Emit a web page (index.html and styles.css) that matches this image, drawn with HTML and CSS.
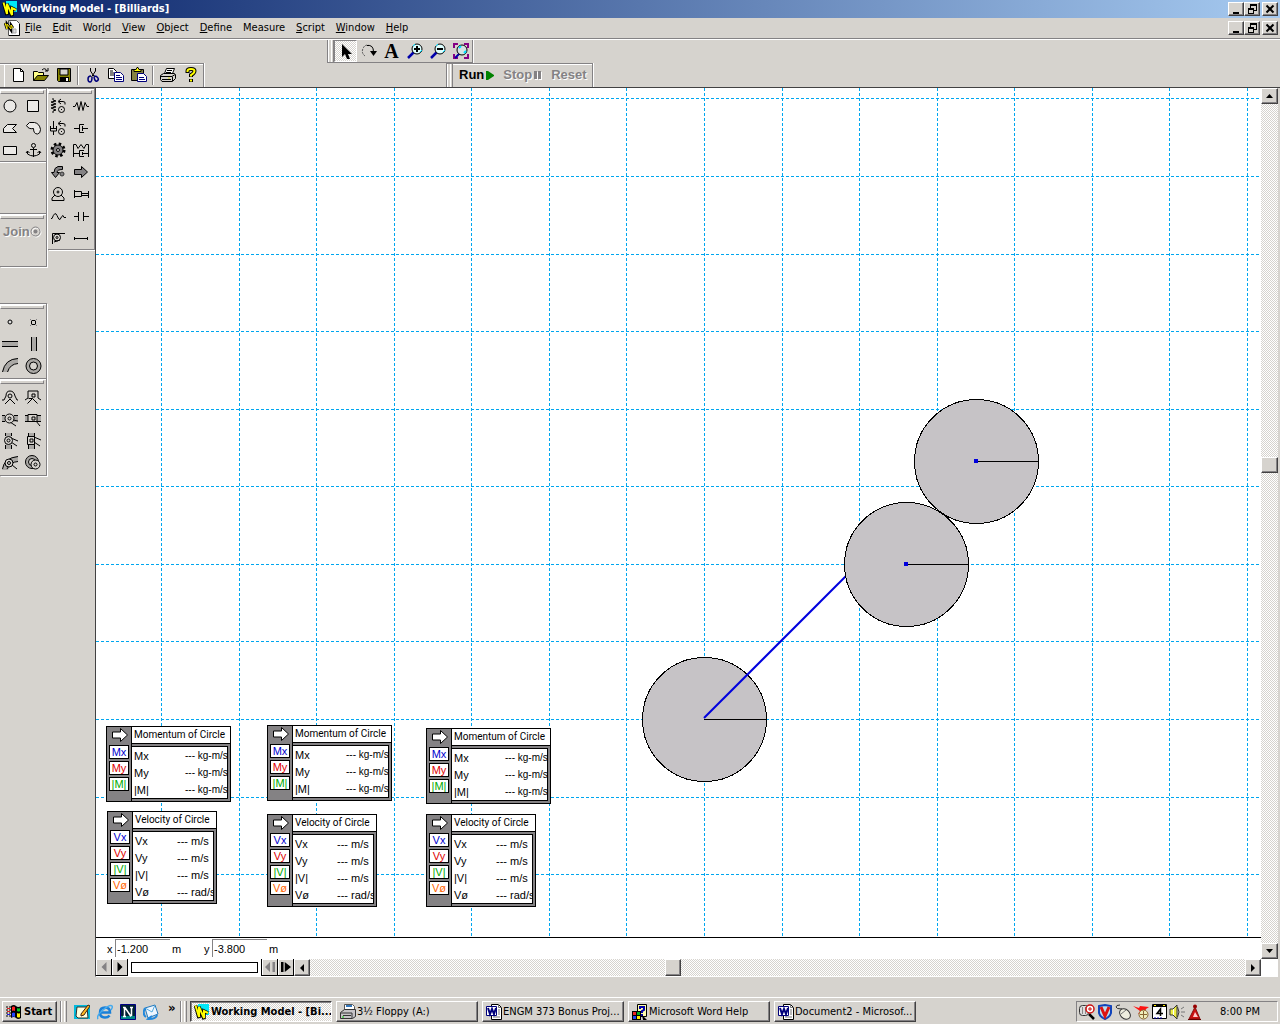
FILE: index.html
```html
<!DOCTYPE html>
<html lang="en">
<head>
<meta charset="utf-8">
<title>Working Model - [Billiards]</title>
<link rel="stylesheet" href="styles.css">
</head>
<body>
<svg class="defs" aria-hidden="true">
  <symbol id="logo" viewBox="0 0 16 16"><path d="M4 0H15V11H9L4 6z" fill="#00e8f8"/><path d="M1.500 1.500L5 14V3L10 15V7L14 9" fill="none" stroke="#000" stroke-width="3.500"/><path d="M1.500 1.500L5 13V3L10 14V7L14 9" fill="none" stroke="#ff0" stroke-width="2"/></symbol>
  <symbol id="min" viewBox="0 0 10 10"><path d="M2 8h6v2H2z"/></symbol>
  <symbol id="restore" viewBox="0 0 10 10"><path d="M3 0h7v7H7V6h2V2H4v2H3zM1 4h6v6H1zM2 6v3h4V6z" fill-rule="evenodd"/></symbol>
  <symbol id="close" viewBox="0 0 10 10"><path d="M1.500 1.500L8.500 8.500M8.500 1.500L1.500 8.500" stroke="#000" stroke-width="2"/></symbol>
  <symbol id="word" viewBox="0 0 16 16"><path d="M5.500.500h7l3 3v12h-10z" fill="#fff" stroke="#000"/><path d="M12.500.500v3h3M12 6h2M12 8h2M12 10h2M7 13h7" fill="none" stroke="#777"/><path d="M.500 2.500h10v9H.500z" fill="#fff" stroke="#00007b"/><path d="M2 4l2 6 2-5 2 5 2-6" fill="none" stroke="#00007b" stroke-width="2"/></symbol>
  <symbol id="left" viewBox="0 0 8 8"><path d="M6 0v8L2 4z"/></symbol>
  <symbol id="right" viewBox="0 0 8 8"><path d="M2 0v8l4-4z"/></symbol>
  <symbol id="arrow" viewBox="0 0 18 16"><path d="M1.500 5h8V1.500l7 6.500-7 6.500V11h-8z" fill="#fff" stroke="#000"/></symbol>
</svg>

<header class="titlebar">
  <svg class="i16"><use href="#logo"/></svg>
  <h1>Working Model - [Billiards]</h1>
  <div class="winbtns">
    <button aria-label="Minimize"><svg><use href="#min"/></svg></button><button aria-label="Restore"><svg><use href="#restore"/></svg></button><button class="x" aria-label="Close"><svg><use href="#close"/></svg></button>
  </div>
</header>

<nav class="menubar">
  <svg class="i16" viewBox="0 0 16 16"><path d="M4.500.500h8l3 3v12h-11z" fill="#fff" stroke="#555"/><path d="M15.500 4v11.500H5" fill="none" stroke="#000"/><path d="M9 9h3v4H9z" fill="#ddd" stroke="#aaa"/><path d="M1 3l2 6V4l4 6V5l2 3" fill="none" stroke="#000" stroke-width="2.500"/><path d="M1 3l2 6V4l4 5V5l2 3" fill="none" stroke="#fe0"/></svg>
  <div class="menus">
    <button><u>F</u>ile</button><button><u>E</u>dit</button><button>Wor<u>l</u>d</button><button><u>V</u>iew</button><button><u>O</u>bject</button><button><u>D</u>efine</button><button>Measure</button><button><u>S</u>cript</button><button><u>W</u>indow</button><button><u>H</u>elp</button>
  </div>
  <div class="winbtns">
    <button aria-label="Minimize document"><svg><use href="#min"/></svg></button><button aria-label="Restore document"><svg><use href="#restore"/></svg></button><button class="x" aria-label="Close document"><svg><use href="#close"/></svg></button>
  </div>
</nav>

<div class="bars">
  <div class="barrow tools">
    <div class="bar">
      <span class="grip"></span>
      <button class="on" aria-label="Select"><svg class="i16" viewBox="0 0 16 16"><path d="M4 1v13l3-3 2 5h3l-2-5h4z"/></svg></button>
      <button aria-label="Rotate"><svg class="i16" viewBox="0 0 16 16"><path d="M4 13Q0 10 2 5.500T8 2.500" fill="none" stroke="#555" stroke-dasharray="2 1"/><path d="M6 2.500Q12.500 1.500 12.500 9" fill="none" stroke="#000"/><path d="M9 8h7l-3.500 5z"/></svg></button>
      <button class="texttool" aria-label="Text tool">A</button>
      <button aria-label="Zoom in"><svg class="i16" viewBox="0 0 16 16"><path d="M1 15l6-6" stroke="#00a" stroke-width="2.500"/><circle cx="10" cy="6" r="5" fill="#dff" stroke="#000"/><path d="M6 3l2-2M13 9l2-2" stroke="#0df"/><path d="M7 6h6M10 3v6" stroke="#000" stroke-width="2"/></svg></button>
      <button aria-label="Zoom out"><svg class="i16" viewBox="0 0 16 16"><path d="M1 15l6-6" stroke="#00a" stroke-width="2.500"/><circle cx="10" cy="6" r="5" fill="#dff" stroke="#000"/><path d="M6 3l2-2M13 9l2-2" stroke="#0df"/><path d="M7 6h6" stroke="#000" stroke-width="2"/></svg></button>
      <button aria-label="Zoom to extent"><svg class="i16" viewBox="0 0 16 16"><path d="M1 5V1h4M11 1h4v4M15 11v4h-4M5 15H1v-4" fill="none" stroke="#840084" stroke-width="2"/><path d="M2 15l5-5" stroke="#00a" stroke-width="2"/><circle cx="9" cy="7" r="5" fill="#d6e4e4" stroke="#000"/><path d="M6 5l2-2M11 10l2-2" stroke="#0df" stroke-width="2"/></svg></button>
    </div>
  </div>
  <div class="barrow files">
    <div class="bar filebar">
      <span class="edge"></span>
      <button aria-label="New"><svg class="i16" viewBox="0 0 16 16"><path d="M3.500 1.500h7l3 3v10h-10z" fill="#fff" stroke="#000"/><path d="M10.500 1.500v3h3" fill="none" stroke="#000"/></svg></button>
      <button aria-label="Open"><svg class="i16" viewBox="0 0 16 16"><path d="M.500 13.500v-9h4l1 1h5v3" fill="#ff8" stroke="#000"/><path d="M.500 13.500l4-5h11l-4 5z" fill="#848200" stroke="#000"/><path d="M9 3q3-3 5 1M15 1v3h-3" fill="none" stroke="#000"/></svg></button>
      <button aria-label="Save"><svg class="i16" viewBox="0 0 16 16"><path d="M1.500 1.500h13v13h-12l-1-1z" fill="#848200" stroke="#000"/><path d="M4 2h8v6H4z" fill="#d6d3ce" stroke="#000"/><path d="M4 10h9v5H4z"/><path d="M10 11h2v3h-2z" fill="#fff"/></svg></button>
      <span class="sep"></span>
      <button aria-label="Cut"><svg class="i16" viewBox="0 0 16 16"><path d="M5.500 1v3l4 6M10.500 1v3l-4 6" fill="none" stroke="#000"/><path d="M6 9q-3 0-3 3t2 3 2-5M9 9q3 0 4 2t-1 3-3-4" fill="none" stroke="#00007b" stroke-width="1.500"/></svg></button>
      <button aria-label="Copy"><svg class="i16" viewBox="0 0 16 16"><path d="M.500 1.500h5l3 3v7h-8z" fill="#fff" stroke="#000"/><path d="M2 4h3M2 6h4M2 8h4" stroke="#000"/><path d="M6.500 5.500h6l3 3v6h-9z" fill="#fff" stroke="#00007b"/><path d="M8 8.500h4M8 10.500h6M8 12.500h6" stroke="#00007b"/></svg></button>
      <button aria-label="Paste"><svg class="i16" viewBox="0 0 16 16"><path d="M.500 2.500h12v11H.500z" fill="#848242" stroke="#000"/><path d="M3 4.500h7v-2H8l-1-2H6l-1 2H3z" fill="#ff0" stroke="#000"/><path d="M6.500 6.500h6l3 3v5h-9z" fill="#fff" stroke="#00007b"/><path d="M8 10.500h5M8 12.500h6" stroke="#00007b"/></svg></button>
      <span class="sep"></span>
      <button aria-label="Print"><svg class="i16" viewBox="0 0 16 16"><path d="M4.500 6.500l2-5h8l-2 5" fill="#fff" stroke="#000"/><path d="M7 3.500h5M6 5.500h5" stroke="#000"/><path d="M.500 8.500l3-2h11l1 1v4l-3 3H2l-1.500-2z" fill="#d6d3ce" stroke="#000"/><path d="M1 9.500h11l3-2M2 12.500h9M12.500 10v4" fill="none" stroke="#000"/><path d="M8 11h2" stroke="#dd0"/></svg></button>
      <button aria-label="Help"><svg class="i16" viewBox="0 0 16 16"><path d="M4.500 6V4q0-2 3.500-2t3.500 2T8 8v2M8 12v3" fill="none" stroke="#000" stroke-width="4"/><path d="M4.500 5V4q0-2 3.500-2t3.500 2T8 8v1.500M8 12.500v2" fill="none" stroke="#ff0" stroke-width="2"/></svg></button>
    </div>
    <div class="bar runbar">
      <span class="grip"></span>
      <button class="run">Run<svg width="8" height="9" viewBox="0 0 8 9"><path d="M0 0h2l6 4v1L2 9H0z" fill="#008200"/></svg></button>
      <button class="off" disabled>Stop<svg width="8" height="9" viewBox="0 0 8 9"><path d="M1 1h3v8H1zM5 1h3v8H5z" fill="#fff"/><path d="M0 0h3v8H0zM4 0h3v8H4z" fill="#848284"/></svg></button>
      <button class="off" disabled>Reset</button>
    </div>
  </div>
</div>

<main class="work">
  <aside class="palettes">
    <div class="pcol">
      <div class="pal bodies">
        <span class="hgrip"></span>
        <div class="pgrid">
          <button aria-label="Circle"><svg viewBox="0 0 18 18"><circle cx="9" cy="9" r="6" fill="#ebe9e6" stroke="#000"/></svg></button>
          <button aria-label="Square"><svg viewBox="0 0 18 18"><path d="M3.500 3.500h11v11h-11z" fill="#ebe9e6" stroke="#000"/></svg></button>
          <button aria-label="Polygon"><svg viewBox="0 0 18 18"><path d="M2.500 13.500v-4l4-4h9l-4 4 4 4z" fill="#ebe9e6" stroke="#000"/></svg></button>
          <button aria-label="Curved body"><svg viewBox="0 0 18 18"><path d="M2.500 6.500l3-3h5q5 1 6 7 0 4-3 4.500-4 0-4-5.500-5 1-7-3z" fill="#ebe9e6" stroke="#000"/></svg></button>
          <button aria-label="Rectangle"><svg viewBox="0 0 18 18"><path d="M2.500 5.500h13v8h-13z" fill="#ebe9e6" stroke="#000"/></svg></button>
          <button aria-label="Anchor"><svg viewBox="0 0 18 18"><g fill="none" stroke="#000"><circle cx="9.500" cy="4.500" r="2"/><path d="M9.500 7v9M6 8.500h7M3.500 10v3q6 4 12 0v-3M2 12l1.500-2 2 2M13.500 12l2-2 1.500 2"/></g></svg></button>
        </div>
      </div>
      <div class="pal joinpal">
        <span class="hgrip"></span>
        <button class="off join" disabled>Join<svg width="12" height="12" viewBox="0 0 12 12"><circle cx="6.500" cy="6.500" r="4.500" fill="none" stroke="#fff"/><circle cx="5.500" cy="5.500" r="4.500" fill="none" stroke="#848284"/><circle cx="5.500" cy="5.500" r="2" fill="#848284"/></svg></button>
      </div>
      <div class="pal points">
        <span class="hgrip"></span>
        <div class="pgrid">
          <button aria-label="Point element"><svg viewBox="0 0 18 18"><circle cx="9" cy="9" r="2" fill="#ddd" stroke="#000"/></svg></button>
          <button aria-label="Square point element"><svg viewBox="0 0 18 18"><path d="M7.500 7.500h4v4h-4z" fill="none" stroke="#000"/><path d="M6 6l2 2M13 6l-2 2M6 13l2-2M13 13l-2-2" stroke="#848284"/></svg></button>
          <button aria-label="Horizontal slot"><svg viewBox="0 0 18 18"><path d="M1 6h16v6H1z" fill="#aaa8a5"/><path d="M1 6.500h16M1 11.500h16" stroke="#000"/></svg></button>
          <button aria-label="Vertical slot"><svg viewBox="0 0 18 18"><path d="M7 2h5v14H7z" fill="#aaa8a5"/><path d="M7.500 2v14M12.500 2v14" stroke="#000"/></svg></button>
          <button aria-label="Curved slot"><svg viewBox="0 0 18 18"><path d="M1 15Q4 2 17 1v5Q9 7 7 15z" fill="#aaa8a5"/><path d="M1.500 15Q4 2 17 1.500M6.500 15Q9 7 17 6.500" fill="none" stroke="#000"/></svg></button>
          <button aria-label="Closed slot"><svg viewBox="0 0 18 18"><circle cx="9.500" cy="9" r="5.500" fill="none" stroke="#aaa8a5" stroke-width="4"/><circle cx="9.500" cy="9" r="7.500" fill="none" stroke="#000"/><circle cx="9.500" cy="9" r="4" fill="none" stroke="#000"/></svg></button>
        </div>
      </div>
      <div class="pal joints">
        <span class="hgrip"></span>
        <div class="pgrid">
          <button aria-label="Pin joint"><svg viewBox="0 0 18 18"><g fill="none" stroke="#000"><path d="M1 12h2l2-4q0-5 4-5t5 5l2 4h1M9 11l-5 5M9 11l5 5"/><circle cx="9" cy="8" r="2"/></g></svg></button>
          <button aria-label="Rigid joint"><svg viewBox="0 0 18 18"><g fill="none" stroke="#000"><path d="M1 12l3-2V3h10v7l3 2M4.500 10.500h4l-5 5M8.500 10.500l5 5"/><path d="M8 6h3v3H8z"/></g></svg></button>
          <button aria-label="Pinned slot joint"><svg viewBox="0 0 18 18"><path d="M1 6h16v6H1z" fill="#aaa8a5"/><g stroke="#000"><path d="M1 5.500h3M13 5.500h4M1 11.500h3M9 12l6 4M12 10l5 1"/><circle cx="8.500" cy="8.500" r="4.500" fill="#d6d3ce"/><circle cx="8.500" cy="8.500" r="1.500" fill="none"/></g></svg></button>
          <button aria-label="Keyed slot joint"><svg viewBox="0 0 18 18"><path d="M1 6h16v6H1z" fill="#aaa8a5"/><g stroke="#000"><path d="M1 5.500h16M1 11.500h16M12 11l4 5"/><path d="M4 4.500h9v7H4z" fill="#d6d3ce"/><path d="M8 7h3v3H8z" fill="none"/></g></svg></button>
          <button aria-label="Vertical pinned slot"><svg viewBox="0 0 18 18"><path d="M5 1h5v16H5z" fill="#aaa8a5"/><g stroke="#000"><path d="M4.500 1v3M10.500 1v3M4.500 13v4M10.500 13v4M10 6l7 3M10 10l6 4"/><circle cx="7.500" cy="8.500" r="4" fill="#d6d3ce"/><circle cx="7.500" cy="8.500" r="1.500" fill="none"/></g></svg></button>
          <button aria-label="Vertical keyed slot"><svg viewBox="0 0 18 18"><path d="M5 1h5v16H5z" fill="#aaa8a5"/><g stroke="#000"><path d="M4.500 1v16M10.500 1v16M10 5l7 3M10 10l6 4"/><path d="M3.500 4.500h7v8h-7z" fill="#d6d3ce"/><path d="M6 7h3v3H6z" fill="none"/></g></svg></button>
          <button aria-label="Curved slot joint"><svg viewBox="0 0 18 18"><path d="M1 16Q3 3 17 2v5Q9 8 7 16z" fill="#aaa8a5"/><g stroke="#000"><path d="M1.500 15Q3 4 17 2.500M6 15Q9 8 17 7.500M11 11l5 4" fill="none"/><circle cx="8" cy="9" r="4" fill="#d6d3ce"/><circle cx="8" cy="9" r="1.500" fill="none"/></g></svg></button>
          <button aria-label="Closed curved slot joint"><svg viewBox="0 0 18 18"><g stroke="#000"><circle cx="8" cy="8" r="6.500" fill="#aaa8a5"/><circle cx="8" cy="8" r="3.500" fill="#d6d3ce"/><circle cx="11.500" cy="10.500" r="4.500" fill="#d6d3ce"/><circle cx="11.500" cy="10.500" r="1.500" fill="none"/></g></svg></button>
        </div>
      </div>
    </div>
    <div class="pcol">
      <div class="pal constraints">
        <span class="hgrip"></span>
        <div class="pgrid">
          <button aria-label="Rotational spring"><svg viewBox="0 0 18 18"><g fill="none" stroke="#000"><path d="M4 1v2l3 1-5 1 5 2-5 1 5 2-5 1 5 2-3 1v2M10 4.500h4q3 0 2 3M12 2l-3 2.500 3 2.500"/><circle cx="12.500" cy="12.500" r="3"/><path d="M12 12.500h1"/></g></svg></button>
          <button aria-label="Spring"><svg viewBox="0 0 18 18"><path d="M1 9.500h2l2-4 2 8 2-9 2 9 2-8 2 4h2" fill="none" stroke="#000"/></svg></button>
          <button aria-label="Rotational damper"><svg viewBox="0 0 18 18"><g fill="none" stroke="#000"><path d="M4.500 2v7M1.500 7v5h6V7M2 9.500h5M4.500 12v4M10 4.500h4q3 0 2 3M12 2l-3 2.500 3 2.500"/><circle cx="12.500" cy="12.500" r="3"/><path d="M12 12.500h1"/></g></svg></button>
          <button aria-label="Damper"><svg viewBox="0 0 18 18"><path d="M2 9.500h5M12 5.500H7.500v8H12M10.500 7v5M11 9.500h5" fill="none" stroke="#000"/></svg></button>
          <button aria-label="Gear"><svg viewBox="0 0 18 18"><circle cx="9" cy="9" r="6" fill="none" stroke="#000" stroke-width="3" stroke-dasharray="2.400 2.310"/><circle cx="9" cy="9" r="5" fill="#848284" stroke="#000"/><circle cx="9" cy="9" r="1.500" fill="#ddd" stroke="#000"/></svg></button>
          <button aria-label="Spring damper"><svg viewBox="0 0 18 18"><path d="M1.500 16V3.500H4l2 4 3-4 3 4 2-4h2.500V16M2 12.500h5M12 9.500H7.500v6H12M10.500 11v3M11 12.500h5" fill="none" stroke="#000"/></svg></button>
          <button aria-label="Torque"><svg viewBox="0 0 18 18"><path d="M13.500 3.500H9q-4 1-4 6H2.500l4 5 4-5H8q0-3 5.500-3z" fill="#848284" stroke="#000"/><circle cx="13" cy="11" r="2" fill="#848284" stroke="#333"/></svg></button>
          <button aria-label="Force"><svg viewBox="0 0 18 18"><path d="M2.500 6.500h7v-3l6 5.500-6 5.500v-3h-7z" fill="#848284" stroke="#000"/></svg></button>
          <button aria-label="Motor"><svg viewBox="0 0 18 18"><g fill="none" stroke="#000"><circle cx="9" cy="7" r="4.500"/><circle cx="9" cy="7" r="1"/><path d="M6 10l-3 3v2.500h12V13l-3-3"/></g></svg></button>
          <button aria-label="Actuator"><svg viewBox="0 0 18 18"><path d="M2.500 5v8M2.500 6.500h7v5h-7M10 8.500h6M10 10.500h6M16.500 6v7" fill="none" stroke="#000"/></svg></button>
          <button aria-label="Rope"><svg viewBox="0 0 18 18"><path d="M2 11.500h1q3-8 5-3t3 4q2-4 3-4l1 2h2" fill="none" stroke="#000"/></svg></button>
          <button aria-label="Separator"><svg viewBox="0 0 18 18"><path d="M2 9.500h4.500M6.500 5v9M11.500 5v9M12 9.500h5" fill="none" stroke="#000"/></svg></button>
          <button aria-label="Pulley"><svg viewBox="0 0 18 18"><g fill="none" stroke="#000"><path d="M3.500 15V4.500H16M11 11l-6 2"/><circle cx="8" cy="8.500" r="3.500"/><circle cx="8" cy="8.500" r="1"/></g></svg></button>
          <button aria-label="Rod"><svg viewBox="0 0 18 18"><path d="M2.500 8v3M15.500 8v3M3 9.500h12" stroke="#000"/></svg></button>
        </div>
      </div>
    </div>
  </aside>

  <section class="doc">
    <div class="upper">
      <div class="world">
        <svg class="scene" role="img" aria-label="Three billiard balls on a grid">
          <g transform="translate(-96 -88)">
            <path class="grid" d="M161.500 88V2200M239.500 88V2200M316.500 88V2200M394.500 88V2200M471.500 88V2200M549.500 88V2200M626.500 88V2200M704.500 88V2200M782.500 88V2200M859.500 88V2200M937.500 88V2200M1014.500 88V2200M1092.500 88V2200M1169.500 88V2200M1247.500 88V2200"/>
            <path class="grid" d="M96 98.500H4000M96 176.500H4000M96 254.500H4000M96 331.500H4000M96 409.500H4000M96 486.500H4000M96 564.500H4000M96 641.500H4000M96 719.500H4000M96 797.500H4000M96 874.500H4000"/>
            <circle class="ball" cx="704.500" cy="719.500" r="62"/>
            <path class="radius" d="M704 719.500h62"/>
            <path class="vector" d="M704 718L854 568"/>
            <circle class="ball" cx="976.500" cy="461.500" r="62"/>
            <path class="radius" d="M976 461.500h62"/>
            <circle class="ball" cx="906.500" cy="564.500" r="62"/>
            <path class="radius" d="M906 564.500h62"/>
            <path d="M974 459h4v4h-4zM904 562h4v4h-4z" fill="#0000de"/>
          </g>
        </svg>
        <article class="meter mom m1">
          <div class="side"><svg><use href="#arrow"/></svg><button class="b">Mx</button><button class="r">My</button><button class="g">|M|</button></div>
          <div class="face"><h2>Momentum of Circle</h2><div class="vals"><table><tr><th>Mx</th><td>--- kg-m/s</td></tr><tr><th>My</th><td>--- kg-m/s</td></tr><tr><th>|M|</th><td>--- kg-m/s</td></tr></table></div></div>
        </article>
        <article class="meter mom m2">
          <div class="side"><svg><use href="#arrow"/></svg><button class="b">Mx</button><button class="r">My</button><button class="g">|M|</button></div>
          <div class="face"><h2>Momentum of Circle</h2><div class="vals"><table><tr><th>Mx</th><td>--- kg-m/s</td></tr><tr><th>My</th><td>--- kg-m/s</td></tr><tr><th>|M|</th><td>--- kg-m/s</td></tr></table></div></div>
        </article>
        <article class="meter mom m3">
          <div class="side"><svg><use href="#arrow"/></svg><button class="b">Mx</button><button class="r">My</button><button class="g">|M|</button></div>
          <div class="face"><h2>Momentum of Circle</h2><div class="vals"><table><tr><th>Mx</th><td>--- kg-m/s</td></tr><tr><th>My</th><td>--- kg-m/s</td></tr><tr><th>|M|</th><td>--- kg-m/s</td></tr></table></div></div>
        </article>
        <article class="meter vel v1">
          <div class="side"><svg><use href="#arrow"/></svg><button class="b">Vx</button><button class="r">Vy</button><button class="g">|V|</button><button class="o">Vø</button></div>
          <div class="face"><h2>Velocity of Circle</h2><div class="vals"><table><tr><th>Vx</th><td>--- m/s</td></tr><tr><th>Vy</th><td>--- m/s</td></tr><tr><th>|V|</th><td>--- m/s</td></tr><tr><th>Vø</th><td>--- rad/s</td></tr></table></div></div>
        </article>
        <article class="meter vel v2">
          <div class="side"><svg><use href="#arrow"/></svg><button class="b">Vx</button><button class="r">Vy</button><button class="g">|V|</button><button class="o">Vø</button></div>
          <div class="face"><h2>Velocity of Circle</h2><div class="vals"><table><tr><th>Vx</th><td>--- m/s</td></tr><tr><th>Vy</th><td>--- m/s</td></tr><tr><th>|V|</th><td>--- m/s</td></tr><tr><th>Vø</th><td>--- rad/s</td></tr></table></div></div>
        </article>
        <article class="meter vel v3">
          <div class="side"><svg><use href="#arrow"/></svg><button class="b">Vx</button><button class="r">Vy</button><button class="g">|V|</button><button class="o">Vø</button></div>
          <div class="face"><h2>Velocity of Circle</h2><div class="vals"><table><tr><th>Vx</th><td>--- m/s</td></tr><tr><th>Vy</th><td>--- m/s</td></tr><tr><th>|V|</th><td>--- m/s</td></tr><tr><th>Vø</th><td>--- rad/s</td></tr></table></div></div>
        </article>
      </div>
      <div class="coords">
        <label for="cx">x</label><input id="cx" value="-1.200"><span class="unit">m</span>
        <label for="cy">y</label><input id="cy" value="-3.800"><span class="unit">m</span>
      </div>
    </div>
    <div class="vscroll">
      <button aria-label="Scroll up"><svg viewBox="0 0 8 8"><path d="M0 6h7L3.500 2z"/></svg></button>
      <div class="before"></div><div class="thumb"></div><div class="after"></div>
      <button aria-label="Scroll down"><svg viewBox="0 0 8 8"><path d="M0 2h7L3.500 6z"/></svg></button>
    </div>
    <div class="player">
      <button class="dim" aria-label="Previous frame"><svg><use href="#left"/></svg></button><button aria-label="Play"><svg><use href="#right"/></svg></button>
      <div class="tape"><span></span></div>
      <button class="dim" aria-label="Step back"><svg viewBox="0 0 8 8"><path d="M4 0v8L0 4zM6 0h2v8H6z"/></svg></button><button aria-label="Step forward"><svg viewBox="0 0 8 8"><path d="M0 0h2v8H0zM3 0v8l5-4z"/></svg></button>
      <div class="hscroll">
        <button aria-label="Scroll left"><svg><use href="#left"/></svg></button>
        <div class="before"></div><div class="thumb"></div><div class="after"></div>
        <button aria-label="Scroll right"><svg><use href="#right"/></svg></button>
      </div>
    </div>
    <div class="corner"></div>
  </section>
</main>
<div class="status"></div>

<footer class="taskbar">
  <button class="start"><svg class="i16" viewBox="0 0 16 16"><path d="M5 2q3-2 5 0t5 0v12q-3 2-5 0t-5 0z"/><path d="M6 3q2-1 3 0v4q-2-1-3 0z" fill="#f22"/><path d="M11 4q2 1 3 0v3q-1 1-3 0z" fill="#0c2"/><path d="M6 9q2-1 3 0v4q-2-1-3 0z" fill="#24f"/><path d="M11 9q2 1 3 0v4q-1 1-3 0z" fill="#fe0"/><path d="M0 3h2M3 3h2M0 6h2M3 6h2M0 9h2M3 9h2M0 12h2M3 12h2" stroke="#000"/><path d="M1 4.500h3M1 7.500h3" stroke="#d22"/><path d="M1 10.500h3" stroke="#22d"/></svg>Start</button>
  <span class="tgrip"></span>
  <div class="quick">
    <a href="#" aria-label="Show Desktop"><svg class="i16" viewBox="0 0 16 16"><path d="M0 1h16v14H0z" fill="#0bd"/><path d="M3 3h10l1 11H4L2 12z" fill="#ffd" stroke="#333"/><path d="M7 10l7-9 2 1-6 9-3 1z" fill="#fb2" stroke="#421"/></svg></a>
    <a href="#" aria-label="Internet Explorer"><svg class="i16" viewBox="0 0 16 16"><path d="M4 8.500h9q0-5-5-5t-5 5 5 5q3 0 4.500-2" fill="none" stroke="#1a80d8" stroke-width="2.500"/><path d="M1 15q-2-3 5-9t9-4q1 1-1 4" fill="none" stroke="#4ae" stroke-width="1.500"/></svg></a>
    <a href="#" aria-label="Netscape"><svg class="i16" viewBox="0 0 16 16"><path d="M.500.500h15v15H.500z" fill="#023" stroke="#000084"/><path d="M1 12h14v3H1z" fill="#088"/><path d="M4.500 4v8M11.500 4v8M3 3.500h2l6 9M10 3.500h3M3 12.500h3" fill="none" stroke="#fff" stroke-width="1.500"/></svg></a>
    <a href="#" aria-label="Outlook Express"><svg class="i16" viewBox="0 0 16 16"><path d="M2 4l10-3 3 9-10 4z" fill="#eef6ff" stroke="#27b"/><path d="M2 4l7 4 3-7" fill="none" stroke="#5ad"/><path d="M2 4q-3 6 1 9M6 15q7 0 8-4M9 12l-4 3 4 1" fill="none" stroke="#28d" stroke-width="2"/></svg></a>
  </div>
  <span class="more">»</span>
  <span class="tgrip"></span>
  <div class="tasks">
    <button class="active"><svg class="i16"><use href="#logo"/></svg>Working Model - [Bi...</button>
    <button><svg class="i16" viewBox="0 0 16 16"><path d="M4.500.500h8l2 2v5h-10z" fill="#fff" stroke="#555"/><path d="M6 1h6v2H6z" fill="#37b"/><path d="M.500 8.500l4-3h11v7l-3 2H.500z" fill="#c6c3c6" stroke="#333"/><path d="M1 9h11v5M3 11.500h8" fill="none" stroke="#333"/><path d="M2 13h2" stroke="#0c0"/></svg>3½ Floppy (A:)</button>
    <button><svg class="i16"><use href="#word"/></svg>ENGM 373 Bonus Proj...</button>
    <button><svg class="i16" viewBox="0 0 16 16"><path d="M5.500.500h9v12h-9z" fill="#ffa" stroke="#000"/><path d="M8 5V3h4v3l-2 1v2M10 10v2" fill="none" stroke="#00a" stroke-width="2"/><path d="M0 7h9v9H0z"/><path d="M1 8h3v3H1z" fill="#e22"/><path d="M5 8h3v3H5z" fill="#0a2"/><path d="M1 12h3v3H1z" fill="#24e"/><path d="M5 12h3v3H5z" fill="#fe0"/><path d="M10 11l5 5h-4z"/></svg>Microsoft Word Help</button>
    <button><svg class="i16"><use href="#word"/></svg>Document2 - Microsof...</button>
  </div>
  <div class="tray">
    <svg class="i16" viewBox="0 0 16 16"><rect x=".500" y="1.500" width="9" height="10" rx="3" fill="#ddd" stroke="#333"/><path d="M3.500 3v7M6.500 3v7" stroke="#888"/><path d="M10 10l5 5" stroke="#000" stroke-width="2.500"/><circle cx="11" cy="5" r="4" fill="#fff" stroke="#c11" stroke-width="1.500"/><path d="M9 5h4M11 3v4" stroke="#c11"/></svg>
    <svg class="i16" viewBox="0 0 16 16"><path d="M2 2l6-1 6 1v7q-1 4-6 6-5-2-6-6z" fill="#bde" stroke="#14b" stroke-width="2"/><path d="M4 3l4 9 4-9" fill="none" stroke="#d11" stroke-width="3"/></svg>
    <svg class="i16" viewBox="0 0 16 16"><path d="M7 5Q1 5 1 3t4-2" fill="none" stroke="#333"/><ellipse cx="10" cy="10" rx="6" ry="4.500" transform="rotate(42 10 10)" fill="#eeeddf" stroke="#333"/><path d="M6 10l5-4" stroke="#777"/></svg>
    <svg class="i16" viewBox="0 0 16 16"><path d="M0 2l6 2 1-2 9 1-3 2-1 3-7 2 2-3z" fill="#f11"/><circle cx="10.500" cy="10.500" r="4.500" fill="#eeb" stroke="#863"/><path d="M10.500 7v7M7 10.500h7" stroke="#863"/></svg>
    <svg class="i16" viewBox="0 0 16 16"><path d="M1.500.500h14v14h-14z" fill="#fff" stroke="#000"/><path d="M1 1h15v2H1z"/><path d="M3 1h2v1H3zM12 1h2v1h-2z" fill="#fe0"/><path d="M9.500 12V5L6 9.500h6" fill="none" stroke="#000" stroke-width="1.500"/><path d="M3 14h9" stroke="#00a" stroke-dasharray="2 1"/></svg>
    <svg class="i16" viewBox="0 0 16 16"><path d="M1 5h3l4-4v14l-4-4H1z" fill="#ee4" stroke="#333"/><path d="M4.500 5v6" stroke="#fff"/><path d="M8.500 3q3 5 0 10" fill="none" stroke="#333"/><path d="M12 5l3-2M12 8h4M12 11l3 2" stroke="#777"/></svg>
    <svg class="i16" viewBox="0 0 16 16"><circle cx="8" cy="2.500" r="2" fill="#900"/><path d="M8 3l5 12H2z" fill="#c11" stroke="#811"/><path d="M8 8l-2 5h5z" fill="#fcc"/><path d="M1 15.500h13" stroke="#600"/></svg>
    <time>8:00 PM</time>
  </div>
</footer>
</body>
</html>
```
FILE: styles.css
```css
:root {
  --face: #d6d3ce;
  --shade: #848284;
  --dark: #424142;
  --dither: conic-gradient(#d6d3ce 25%, #fff 0 50%, #d6d3ce 0 75%, #fff 0) 0 0 / 2px 2px;
}
* { box-sizing: border-box; }
body {
  margin: 0;
  min-height: 100vh;
  display: flex;
  flex-direction: column;
  background: var(--face);
  color: #000;
  font: 11px/14px "DejaVu Sans Condensed", "DejaVu Sans", sans-serif;
}
button {
  margin: 0;
  padding: 0;
  border: 0;
  background: none;
  color: inherit;
  font: inherit;
  white-space: nowrap;
}
svg { flex: none; display: block; }
.defs { position: absolute; width: 0; height: 0; }
.i16 { width: 16px; height: 16px; }

/* Title and menu */
.titlebar {
  display: flex;
  align-items: center;
  height: 18px;
  padding: 0 2px;
  background: linear-gradient(90deg, #0a246a, #a6caf0);
  color: #fff;
}
.titlebar h1 { margin: 0 0 0 2px; font-size: 11px; line-height: 18px; }
.menubar {
  display: flex;
  align-items: center;
  height: 20px;
  padding: 0 2px 0 4px;
}
.menus { display: flex; }
.menus button { padding: 0 6px 0 5px; line-height: 20px; }
.winbtns { display: flex; margin-left: auto; }
.winbtns button {
  display: flex;
  align-items: center;
  justify-content: center;
  width: 16px;
  height: 14px;
}
.winbtns .x { margin-left: 2px; }
.winbtns svg { width: 10px; height: 10px; }
.winbtns button, .start, .tasks button, .vscroll button, .hscroll button, .thumb {
  background: var(--face);
  border: 1px solid;
  border-color: #fff var(--dark) var(--dark) #fff;
  box-shadow: inset -1px -1px var(--shade);
}

/* Toolbars */
.bars { border-top: 1px solid var(--shade); box-shadow: inset 0 1px #fff; }
.barrow { display: flex; height: 24px; }
.bar {
  display: flex;
  align-items: flex-start;
  border-right: 1px solid var(--shade);
  box-shadow: 1px 0 #fff;
}
.bar button {
  display: flex;
  align-items: center;
  justify-content: center;
  width: 23px;
  height: 22px;
}
.tools { padding: 1px 0 0 327px; }
.tools .bar { border-bottom: 1px solid var(--shade); }
.bar .on { background: var(--dither); border: 1px solid; border-color: var(--shade) #fff #fff var(--shade); }
.bar .texttool { font: bold 20px/20px "Liberation Serif", serif; }
.grip {
  align-self: stretch;
  width: 7px;
  border-left: 1px solid var(--shade);
  background: linear-gradient(90deg, #fff 1px, var(--face) 1px 3px, #fff 3px 4px, var(--face) 4px 5px, var(--shade) 5px 6px, var(--face) 6px);
}
.files .bar { border-top: 1px solid var(--shade); box-shadow: 1px 0 #fff, inset 0 1px #fff; }
.filebar { width: 204px; }
.edge { align-self: stretch; width: 2px; margin: 0 0 0 4px; border-left: 1px solid #fff; }
.sep {
  align-self: stretch;
  width: 2px;
  margin: 2px;
  background: linear-gradient(90deg, var(--shade) 1px, #fff 1px);
}
.runbar { margin-left: 242px; width: 147px; }
.bar.runbar button, .off { font: bold 13px/16px "Liberation Sans", Arial, sans-serif; }
.bar.runbar button { width: auto; gap: 2px; margin-right: 9px; }
.bar.runbar .run { margin-left: 5px; }
.bar.runbar .grip + .run { margin-left: 6px; }
.bar.runbar button:last-child { margin-right: 0; }
.off { color: var(--shade); text-shadow: 1px 1px #fff; }

/* Palettes */
.work { flex: 1; display: flex; border-top: 1px solid var(--dark); }
.palettes { display: flex; width: 95px; flex: none; }
.pcol { width: 48px; }
.pcol + .pcol { width: 46px; }
.pal {
  border: solid var(--shade);
  border-width: 1px 1px 1px 0;
  box-shadow: 1px 1px #fff, inset 0 1px #fff;
  width: 47px;
}
.hgrip {
  display: block;
  height: 4px;
  margin: 1px 2px 1px 0;
  border: 1px solid;
  border-color: #fff var(--shade) var(--shade) #fff;
}
.pgrid { display: grid; grid-template-columns: 23px 23px; grid-auto-rows: 22px; }
.pgrid button { display: flex; align-items: center; justify-content: flex-start; width: 23px; padding-left: 1px; }
.pgrid svg { width: 18px; height: 18px; }
.bodies { height: 126px; }
.bodies .pgrid { border-bottom: 1px solid var(--shade); box-shadow: 0 1px #fff; }
.constraints { height: 162px; }
.joinpal { height: 54px; margin-top: -1px; }
.join { display: flex; align-items: center; margin: 5px 0 0 3px; }
.points { margin-top: 36px; height: 76px; }
.joints { height: 98px; margin-top: -1px; }
.points .pgrid, .joints .pgrid { padding-top: 1px; }

/* Document */
.doc {
  flex: 1;
  min-width: 0;
  display: grid;
  grid-template-columns: 1fr 17px;
  grid-template-rows: 1fr 17px;
  border-left: 1px solid var(--dark);
  border-bottom: 1px solid #fff;
  margin-right: 2px;
  background: #fff;
}
.upper { display: flex; flex-direction: column; min-width: 0; }
.world { flex: 1; position: relative; overflow: hidden; min-height: 600px; }
.scene { position: absolute; inset: 0; width: 100%; height: 100%; }
.grid { stroke: #00a6ef; stroke-dasharray: 3 2; shape-rendering: crispEdges; }
.ball { fill: #c6c3c6; stroke: #000; shape-rendering: crispEdges; }
.radius { stroke: #000; }
.vector { stroke: #0000de; stroke-width: 2; }

.meter {
  position: absolute;
  display: flex;
  border: 1px solid #000;
  background: var(--shade);
  font: 11px/14px "Liberation Sans", Arial, sans-serif;
}
.mom { width: 125px; height: 76px; }
.vel { width: 110px; height: 93px; }
.m1 { left: 10px; top: 638px; }
.m2 { left: 171px; top: 637px; }
.m3 { left: 330px; top: 640px; }
.v1 { left: 11px; top: 723px; }
.v2 { left: 171px; top: 726px; }
.v3 { left: 330px; top: 726px; }
.side { width: 24px; padding: 0 2px; display: flex; flex-direction: column; gap: 2px; }
.side svg { width: 18px; height: 16px; margin: 0 2px; }
.side button { height: 14px; border: 1px solid #000; background: #fff; line-height: 12px; }
.b { color: #0000ce; }
.r { color: #de0000; }
.g { color: #00aa00; }
.o { color: #ff6500; }
.face { flex: 1; min-width: 0; border-left: 1px solid #000; display: flex; flex-direction: column; }
.face h2 {
  margin: 0;
  padding-left: 2px;
  height: 17px;
  background: #fff;
  border-bottom: 1px solid #000;
  font: 10px/16px Roboto, sans-serif;
  white-space: nowrap;
}
.vals {
  flex: 1;
  overflow: hidden;
  margin: 2px 2px 2px 0;
  padding-left: 2px;
  background: #fff;
  border: 1px solid #000;
  border-left: 0;
}
.vals table { border-collapse: collapse; white-space: nowrap; }
.vals tr { height: 17px; }
.vals th, .vals td { padding: 0; font-weight: normal; text-align: left; }
.mom td { font-size: 10px; }
.mom th { min-width: 51px; }
.vel th { min-width: 42px; }

.coords {
  display: flex;
  height: 22px;
  padding: 1px 0 0 11px;
  border-top: 1px solid #000;
  background: #fff;
  font: 11px/20px "Liberation Sans", Arial, sans-serif;
}
.coords label { width: 8px; }
.coords input {
  width: 55px;
  height: 18px;
  padding: 0 1px;
  border: solid var(--shade);
  border-width: 1px 0 0 1px;
  background: #fff;
  font: inherit;
}
.coords .unit { width: 34px; padding-left: 2px; }

.vscroll { display: flex; flex-direction: column; background: var(--dither); }
.vscroll button, .hscroll button, .player button { display: flex; align-items: center; justify-content: center; }
.vscroll button, .vscroll .thumb { height: 16px; flex: none; }
.player { display: flex; min-width: 0; }
.player button { width: 16px; flex: none; }
.player > button { background: var(--face); border-right: 1px solid #000; border-bottom: 1px solid #000; box-shadow: inset 1px 1px #fff; }
.player svg, .vscroll svg { width: 8px; height: 8px; }
.player > button svg { width: 10px; height: 10px; }
.dim { fill: var(--shade); }
.tape { width: 134px; padding: 3px; flex: none; border-right: 1px solid #000; }
.tape span { display: block; height: 11px; border: 1px solid #000; }
.hscroll { flex: 1; display: flex; background: var(--dither); }
.hscroll .thumb { width: 16px; flex: none; }
.vscroll .before { flex: 353; }
.vscroll .after { flex: 469; }
.hscroll .before { flex: 355; }
.hscroll .after { flex: 563; }

/* Taskbar */
.status { height: 20px; }
.taskbar {
  display: flex;
  height: 27px;
  padding: 3px 2px 2px;
  border-top: 1px solid #fff;
}
.start { display: flex; align-items: center; gap: 2px; width: 55px; padding: 0 3px; font-weight: bold; }
.start, .tasks button { padding-left: 3px; }
.tgrip {
  width: 7px;
  margin: 0 3px;
  background: linear-gradient(90deg, var(--shade) 1px, #fff 1px 2px, var(--face) 2px 4px, #fff 4px 5px, var(--face) 5px 6px, var(--shade) 6px);
}
.quick { display: flex; align-items: center; gap: 7px; padding: 0 4px; }
.more { width: 9px; margin-left: 5px; font: bold 13px/14px "DejaVu Sans Condensed", sans-serif; }
.tasks { display: flex; flex: 1; gap: 4px; min-width: 0; }
.tasks button { display: flex; align-items: center; gap: 1px; width: 142px; overflow: hidden; }
.tasks .active {
  background: var(--dither);
  border-color: var(--dark) #fff #fff var(--dark);
  box-shadow: inset 1px 1px var(--shade);
  font-weight: bold;
}
.tray {
  display: flex;
  align-items: center;
  gap: 2px;
  width: 202px;
  padding: 0 2px;
  border: 1px solid;
  border-color: var(--shade) #fff #fff var(--shade);
}
.tray time { margin: 0 auto; }
```
